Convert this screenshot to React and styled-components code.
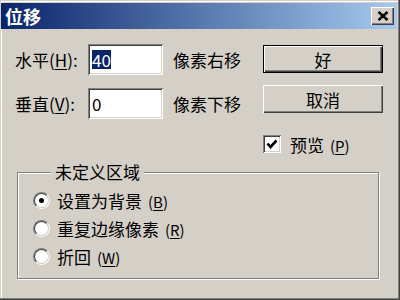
import styled, { createGlobalStyle } from "styled-components";

const Global = createGlobalStyle`
  html, body {
    margin: 0;
    padding: 0;
    background: #d4d0c8;
  }
  body {
    font-family: "Noto Sans CJK SC", "Noto Sans", sans-serif;
    color: #000;
  }
`;

const raised = `
  box-shadow: inset 1px 1px 0 #fff, inset -1px -1px 0 #404040,
    inset -2px -2px 0 #808080;
`;

const sunken = `
  box-shadow: inset 1px 1px 0 #808080, inset -1px -1px 0 #fff,
    inset 2px 2px 0 #404040, inset -2px -2px 0 #d4d0c8;
`;

const Window = styled.div`
  width: 400px;
  height: 300px;
  box-sizing: border-box;
  padding: 3px 3px 3px 1px;
  background: #d4d0c8;
  display: flex;
  flex-direction: column;
  box-shadow: inset -1px -1px 0 #404040, inset -2px -2px 0 #808080,
    inset 1px 1px 0 #d4d0c8, inset 2px 2px 0 #fff;
`;

const TitleBar = styled.div`
  height: 26px;
  display: flex;
  align-items: center;
  justify-content: space-between;
  padding: 0 3px 0 4px;
  background: linear-gradient(to right, #0a246a, #a6caf0);
`;

const Title = styled.span`
  color: #fff;
  font-weight: bold;
  font-size: 18px;
  line-height: 1;
`;

const CloseButton = styled.div`
  width: 23px;
  height: 18px;
  box-sizing: border-box;
  background: #d4d0c8;
  display: flex;
  align-items: center;
  justify-content: center;
  ${raised}
`;

const Body = styled.div`
  padding: 15px 14px 0 14px;
  display: flex;
  flex-direction: column;
`;

const Top = styled.div`
  display: flex;
  align-items: flex-start;
`;

const Form = styled.div`
  display: grid;
  grid-template-columns: 73px 75px 100px;
  grid-auto-rows: 31px;
  row-gap: 13px;
  align-items: center;
`;

const Label = styled.span`
  font-size: 17px;
  white-space: nowrap;
`;

const Key = styled.span`
  text-decoration: underline;
  text-underline-offset: 2px;
`;

const TextField = styled.div`
  box-sizing: border-box;
  height: 31px;
  width: 75px;
  background: #fff;
  padding: 0 4px;
  display: flex;
  align-items: center;
  font-size: 17px;
  ${sunken}
`;

const Selected = styled.span`
  background: #0a246a;
  color: #fff;
  line-height: 19px;
`;

const Unit = styled(Label)`
  padding-left: 10px;
`;

const Side = styled.div`
  width: 120px;
  display: flex;
  flex-direction: column;
  gap: 12px;
  padding-top: 1px;
`;

const PushButton = styled.div`
  height: 28px;
  box-sizing: border-box;
  display: flex;
  align-items: center;
  justify-content: center;
  font-size: 17px;
  background: #d4d0c8;
  ${(p) =>
    p.$default
      ? `box-shadow: inset 1px 1px 0 #000, inset -1px -1px 0 #000,
          inset 2px 2px 0 #fff, inset -2px -2px 0 #404040,
          inset -3px -3px 0 #808080;`
      : raised}
`;

const CheckRow = styled.div`
  margin-top: 10px;
  height: 18px;
  display: flex;
  align-items: center;
  gap: 9px;
  font-size: 17px;
`;

const CheckBox = styled.div`
  width: 18px;
  height: 18px;
  box-sizing: border-box;
  background: #fff;
  display: flex;
  align-items: center;
  justify-content: center;
  ${sunken}
`;

const Group = styled.fieldset`
  margin: 9px 0 0 2px;
  width: 362px;
  box-sizing: border-box;
  min-inline-size: 0;
  padding: 4px 0 8px 15px;
  border: 1px solid #808080;
  box-shadow: 1px 1px 0 #fff, inset 1px 1px 0 #fff;
`;

const Legend = styled.legend`
  margin-left: 18px;
  padding: 0 4px;
  font-size: 17px;
  line-height: 20px;
  background: #d4d0c8;
`;

const RadioRow = styled.div`
  height: 28px;
  display: flex;
  align-items: center;
  gap: 7px;
  font-size: 17px;
`;

const RadioOuter = styled.div`
  width: 17px;
  height: 17px;
  box-sizing: border-box;
  border-radius: 50%;
  border: 1px solid;
  border-color: #808080 #fff #fff #808080;
  display: flex;
`;

const RadioInner = styled.div`
  flex: 1;
  border-radius: 50%;
  border: 1px solid;
  border-color: #404040 #d4d0c8 #d4d0c8 #404040;
  background: #fff;
  display: flex;
  align-items: center;
  justify-content: center;
`;

const Dot = styled.div`
  width: 5px;
  height: 5px;
  border-radius: 50%;
  background: #000;
`;

const Hint = styled.span`
  margin-left: 6px;
  font-size: 15px;
`;

function Radio({ checked, children }) {
  return (
    <RadioRow>
      <RadioOuter>
        <RadioInner>{checked && <Dot />}</RadioInner>
      </RadioOuter>
      {children}
    </RadioRow>
  );
}

export default function App() {
  return (
    <>
      <Global />
      <Window>
        <TitleBar>
          <Title>位移</Title>
          <CloseButton>
            <svg width="12" height="10" viewBox="0 0 12 10">
              <path d="M1.5 1 L10.5 9 M10.5 1 L1.5 9" stroke="#000" strokeWidth="2.6" />
            </svg>
          </CloseButton>
        </TitleBar>
        <Body>
          <Top>
            <Form>
              <Label>
                水平(<Key>H</Key>):
              </Label>
              <TextField>
                <Selected>40</Selected>
              </TextField>
              <Unit>像素右移</Unit>
              <Label>
                垂直(<Key>V</Key>):
              </Label>
              <TextField>0</TextField>
              <Unit>像素下移</Unit>
            </Form>
            <Side>
              <PushButton $default>好</PushButton>
              <PushButton>取消</PushButton>
              <CheckRow>
                <CheckBox>
                  <svg width="12" height="10" viewBox="0 0 12 10">
                    <path d="M1.5 4.5 L4.5 8 L10.5 1.5" fill="none" stroke="#000" strokeWidth="2.6" />
                  </svg>
                </CheckBox>
                <span>
                  预览
                  <Hint>
                    (<Key>P</Key>)
                  </Hint>
                </span>
              </CheckRow>
            </Side>
          </Top>
          <Group>
            <Legend>未定义区域</Legend>
            <Radio checked>
              <span>
                设置为背景
                <Hint>
                  (<Key>B</Key>)
                </Hint>
              </span>
            </Radio>
            <Radio>
              <span>
                重复边缘像素
                <Hint>
                  (<Key>R</Key>)
                </Hint>
              </span>
            </Radio>
            <Radio>
              <span>
                折回
                <Hint>
                  (<Key>W</Key>)
                </Hint>
              </span>
            </Radio>
          </Group>
        </Body>
      </Window>
    </>
  );
}
